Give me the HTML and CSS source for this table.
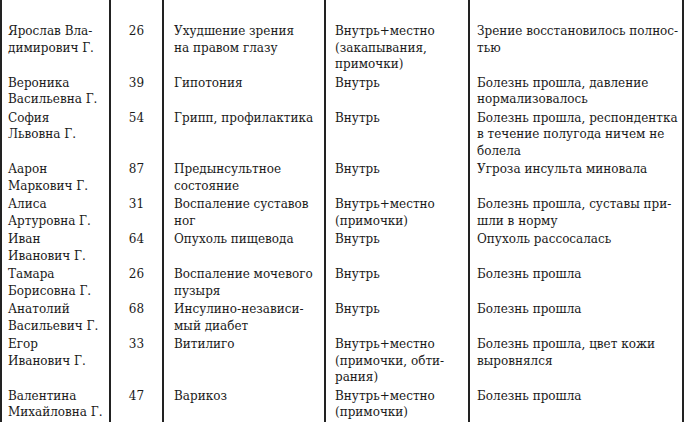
FILE: index.html
```html
<!DOCTYPE html>
<html lang="ru">
<head>
<meta charset="utf-8">
<link rel="stylesheet" href="styles.css">
</head>
<body>
<div class="table">
  <div class="cell c1 first">Ярослав Вла-<br>димирович Г.</div>
  <div class="cell c2 first">26</div>
  <div class="cell c3 first">Ухудшение зрения<br>на правом глазу</div>
  <div class="cell c4 first">Внутрь+местно<br>(закапывания,<br>примочки)</div>
  <div class="cell c5 first">Зрение восстановилось полнос-<br>тью</div>

  <div class="cell c1">Вероника<br>Васильевна Г.</div>
  <div class="cell c2">39</div>
  <div class="cell c3">Гипотония</div>
  <div class="cell c4">Внутрь</div>
  <div class="cell c5">Болезнь прошла, давление<br>нормализовалось</div>

  <div class="cell c1">София<br>Львовна Г.</div>
  <div class="cell c2">54</div>
  <div class="cell c3">Грипп, профилактика</div>
  <div class="cell c4">Внутрь</div>
  <div class="cell c5">Болезнь прошла, респондентка<br>в течение полугода ничем не<br>болела</div>

  <div class="cell c1">Аарон<br>Маркович Г.</div>
  <div class="cell c2">87</div>
  <div class="cell c3">Предынсультное<br>состояние</div>
  <div class="cell c4">Внутрь</div>
  <div class="cell c5">Угроза инсульта миновала</div>

  <div class="cell c1">Алиса<br>Артуровна Г.</div>
  <div class="cell c2">31</div>
  <div class="cell c3">Воспаление суставов<br>ног</div>
  <div class="cell c4">Внутрь+местно<br>(примочки)</div>
  <div class="cell c5">Болезнь прошла, суставы при-<br>шли в норму</div>

  <div class="cell c1">Иван<br>Иванович Г.</div>
  <div class="cell c2">64</div>
  <div class="cell c3">Опухоль пищевода</div>
  <div class="cell c4">Внутрь</div>
  <div class="cell c5">Опухоль рассосалась</div>

  <div class="cell c1">Тамара<br>Борисовна Г.</div>
  <div class="cell c2">26</div>
  <div class="cell c3">Воспаление мочевого<br>пузыря</div>
  <div class="cell c4">Внутрь</div>
  <div class="cell c5">Болезнь прошла</div>

  <div class="cell c1">Анатолий<br>Васильевич Г.</div>
  <div class="cell c2">68</div>
  <div class="cell c3">Инсулино-независи-<br>мый диабет</div>
  <div class="cell c4">Внутрь</div>
  <div class="cell c5">Болезнь прошла</div>

  <div class="cell c1">Егор<br>Иванович Г.</div>
  <div class="cell c2">33</div>
  <div class="cell c3">Витилиго</div>
  <div class="cell c4">Внутрь+местно<br>(примочки, обти-<br>рания)</div>
  <div class="cell c5">Болезнь прошла, цвет кожи<br>выровнялся</div>

  <div class="cell c1 last">Валентина<br>Михайловна Г.</div>
  <div class="cell c2 last">47</div>
  <div class="cell c3 last">Варикоз</div>
  <div class="cell c4 last">Внутрь+местно<br>(примочки)</div>
  <div class="cell c5 last">Болезнь прошла</div>
</div>
</body>
</html>
```

FILE: styles.css
```css
html, body {
  margin: 0;
  padding: 0;
  background: #ffffff;
}

body {
  width: 685px;
  height: 422px;
  overflow: hidden;
}

.table {
  display: grid;
  grid-template-columns: 109px 53px 162px 144px 216px;
  font-family: "DejaVu Serif", "Liberation Serif", serif;
  font-size: 12px;
  line-height: 16.5px;
  color: #1a1a1a;
}

.cell {
  border-left: 2px solid #222222;
  padding: 1px 4px 1px 6px;
  white-space: nowrap;
}

.first {
  padding-top: 23px;
}

.last {
  padding-bottom: 10px;
}

.c2 {
  text-align: center;
  padding-left: 0;
  padding-right: 0;
}

.c3 {
  padding-left: 10px;
}

.c4 {
  padding-left: 9px;
}

.c5 {
  padding-left: 7px;
  border-right: 2px solid #222222;
}
```
